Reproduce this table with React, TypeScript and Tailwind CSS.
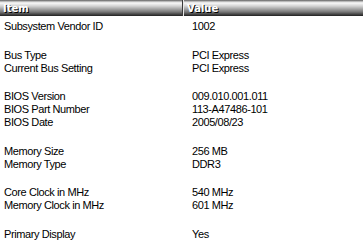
const rows: ([string, string] | null)[] = [
  ["Subsystem Vendor ID", "1002"],
  null,
  ["Bus Type", "PCI Express"],
  ["Current Bus Setting", "PCI Express"],
  null,
  ["BIOS Version", "009.010.001.011"],
  ["BIOS Part Number", "113-A47486-101"],
  ["BIOS Date", "2005/08/23"],
  null,
  ["Memory Size", "256 MB"],
  ["Memory Type", "DDR3"],
  null,
  ["Core Clock in MHz", "540 MHz"],
  ["Memory Clock in MHz", "601 MHz"],
  null,
  ["Primary Display", "Yes"],
];

const headerBg =
  "bg-[linear-gradient(to_bottom,#5e5e5e_0px,#d8d8d8_2px,#f8f8f8_3px,#d4d4d4_6px,#a4a4a4_9px,#767676_12px,#4a4a4a_14px,#202020_16px)]";

export default function App() {
  return (
    <div className="w-[363px] h-[251px] bg-white overflow-hidden font-['Liberation_Sans',Arial,sans-serif] text-[11px] tracking-[-0.4px] text-black">
      <div className={`flex h-[16px] ${headerBg}`}>
        <div className="w-[183px] h-full border-r border-[#3a3a3a] pl-[3px] flex items-center font-['DejaVu_Sans',sans-serif] font-bold text-[10px] tracking-normal text-white [text-shadow:1px_1px_0_#000]">
          Item
        </div>
        <div className="flex-1 h-full border-l border-[#e8e8e8] pl-[3px] flex items-center font-['DejaVu_Sans',sans-serif] font-bold text-[10px] tracking-normal text-white [text-shadow:1px_1px_0_#000]">
          Value
        </div>
      </div>
      <div className="pt-[4px]">
        {rows.map((r, i) =>
          r ? (
            <div key={i} className="flex h-[13px] leading-[13px]">
              <div className="w-[192px] pl-[4px] whitespace-nowrap">{r[0]}</div>
              <div className="flex-1 whitespace-nowrap">{r[1]}</div>
            </div>
          ) : (
            <div key={i} className="h-[15.5px]" />
          )
        )}
      </div>
    </div>
  );
}
